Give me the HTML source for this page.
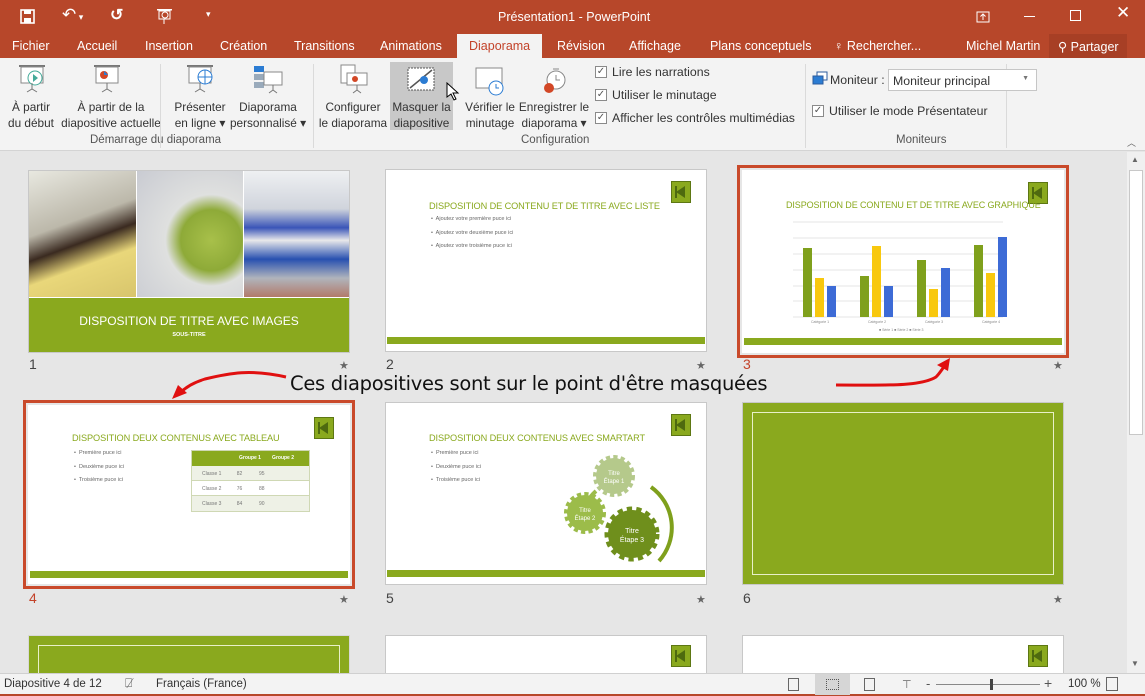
<!DOCTYPE html>
<html style="width:1145px;height:696px;overflow:hidden"><head><meta charset="utf-8"><style>
*{box-sizing:border-box;margin:0;padding:0}
body{width:1145px;height:696px;overflow:hidden;font-family:"Liberation Sans",sans-serif;background:#e6e6e6;position:relative;font-size:12px}
.abs{position:absolute}
#title{left:0;top:0;width:1145px;height:34px;background:#b7472a}
#tabs{left:0;top:34px;width:1145px;height:24px;background:#b7472a}
.tab{position:absolute;top:5px;color:#fff;font-size:12.5px}
#ribbon{left:0;top:58px;width:1145px;height:93px;background:#f3f3f3;border-bottom:1px solid #d4d4d4}
.rl{position:absolute;font-size:11.8px;color:#333;text-align:center;line-height:16px;white-space:nowrap}
.gl{position:absolute;top:76px;font-size:11.5px;color:#555}
.sep{position:absolute;top:6px;width:1px;height:84px;background:#dadada}
.cb{position:absolute;width:12px;height:12px;border:1px solid #8a8a8a;background:#fff;font-size:10px;line-height:10px;text-align:center;color:#555}
.slide{position:absolute;width:322px;height:183px;background:#fff;border:1px solid #c8c8c8;overflow:hidden}
.sel{outline:3px solid #c94a2b;outline-offset:2px;border-color:#fff}
.bar{position:absolute;left:1px;right:1px;bottom:7px;height:7px;background:#8aa91e}
.ico{position:absolute;right:15px;top:11px;width:20px;height:22px;background:#8aa91e;border:1px solid #5d7713}
.ico:after{content:"";position:absolute;left:4px;top:4px;border-right:9px solid #4e6a0f;border-top:6px solid transparent;border-bottom:6px solid transparent}
.ico:before{content:"";position:absolute;left:3px;top:4px;width:2px;height:12px;background:#4e6a0f}
.st{position:absolute;left:43px;top:31px;color:#8aa91e;font-size:9.2px;white-space:nowrap;letter-spacing:-0.1px}
.bl{position:absolute;left:45px;font-size:5.5px;color:#666;white-space:nowrap}
.num{position:absolute;font-size:14px;color:#444}
.star{position:absolute;font-size:11px;color:#666}
#status{left:0;top:673px;width:1145px;height:23px;background:#f3f3f3;border-top:1px solid #d0d0d0;border-bottom:2px solid #b7472a;z-index:5}
</style></head><body>
<div id="title" class="abs">
 <svg class="abs" style="left:20px;top:9px" width="16" height="16"><rect x="1" y="1" width="13" height="13" fill="none" stroke="#fff" stroke-width="1.6"/><rect x="4" y="1" width="7" height="4" fill="#fff"/><rect x="4" y="9" width="7" height="5" fill="#fff"/></svg>
 <div class="abs" style="left:62px;top:5px;color:#fff;font-size:17px">↶<span style="font-size:9px"> ▾</span></div>
 <div class="abs" style="left:110px;top:5px;color:#fff;font-size:16px;font-weight:bold">↺</div>
 <svg class="abs" style="left:156px;top:8px" width="18" height="17"><rect x="1" y="1" width="15" height="1.5" fill="#fff"/><rect x="3" y="3" width="11" height="8" fill="none" stroke="#fff"/><circle cx="9" cy="7" r="3" fill="none" stroke="#fff"/><line x1="8" y1="11" x2="8" y2="16" stroke="#fff"/></svg>
 <div class="abs" style="left:206px;top:9px;color:#fff;font-size:9px">▾</div>
 <div class="abs" style="left:498px;top:10px;color:#fff;font-size:12.5px">Présentation1 - PowerPoint</div>
 <svg class="abs" style="left:976px;top:11px" width="14" height="12"><rect x="1" y="1" width="12" height="10" fill="none" stroke="#fff"/><path d="M7 3v6M4.5 5.5L7 3l2.5 2.5" stroke="#fff" fill="none"/></svg>
 <div class="abs" style="left:1024px;top:16px;width:11px;height:1px;background:#fff"></div>
 <div class="abs" style="left:1070px;top:10px;width:11px;height:11px;border:1px solid #fff"></div>
 <div class="abs" style="left:1116px;top:3px;color:#fff;font-size:17px">✕</div>
</div>
<div id="tabs" class="abs">
 <span class="tab" style="left:12px">Fichier</span>
 <span class="tab" style="left:77px">Accueil</span>
 <span class="tab" style="left:145px">Insertion</span>
 <span class="tab" style="left:220px">Création</span>
 <span class="tab" style="left:294px">Transitions</span>
 <span class="tab" style="left:380px">Animations</span>
 <div class="abs" style="left:457px;top:0;width:85px;height:24px;background:#f3f3f3"></div>
 <span class="tab" style="left:469px;color:#c3432a">Diaporama</span>
 <span class="tab" style="left:557px">Révision</span>
 <span class="tab" style="left:629px">Affichage</span>
 <span class="tab" style="left:710px">Plans conceptuels</span>
 <span class="tab" style="left:834px">♀ Rechercher...</span>
 <span class="tab" style="left:966px">Michel Martin</span>
 <div class="abs" style="left:1049px;top:0;width:78px;height:24px;background:#a73f25"></div>
 <span class="tab" style="left:1058px">⚲ Partager</span>
</div>
<div id="ribbon" class="abs">
 <svg class="abs" style="left:17px;top:6px" width="30" height="32"><rect x="2" y="1" width="26" height="2" fill="#777"/><rect x="4" y="3" width="22" height="16" fill="#fff" stroke="#888"/><circle cx="18" cy="14" r="7" fill="#fff" stroke="#4a9"/><path d="M16 10l5 4-5 4z" fill="#4a9"/><path d="M15 19v6M10 28l5-3 5 3" stroke="#777" fill="none"/></svg>
 <svg class="abs" style="left:92px;top:6px" width="30" height="32"><rect x="2" y="1" width="26" height="2" fill="#777"/><rect x="4" y="3" width="22" height="16" fill="#fff" stroke="#888"/><circle cx="12" cy="11" r="4" fill="#d24726"/><path d="M12 7v4h4" fill="#2b7cd3"/><path d="M15 19v6M10 28l5-3 5 3" stroke="#777" fill="none"/></svg>
 <svg class="abs" style="left:185px;top:6px" width="32" height="32"><rect x="2" y="1" width="26" height="2" fill="#777"/><rect x="4" y="3" width="22" height="16" fill="#fff" stroke="#888"/><circle cx="20" cy="13" r="7" fill="#fff" stroke="#2b7cd3"/><path d="M13 13h14M20 6v14" stroke="#2b7cd3"/><path d="M15 19v6M10 28l5-3 5 3" stroke="#777" fill="none"/></svg>
 <svg class="abs" style="left:252px;top:6px" width="32" height="32"><rect x="2" y="2" width="10" height="6" fill="#2b7cd3"/><rect x="2" y="10" width="10" height="6" fill="#9ab"/><rect x="2" y="18" width="10" height="6" fill="#9ab"/><rect x="12" y="8" width="18" height="13" fill="#fff" stroke="#888"/><path d="M21 21v5M17 29l4-3 4 3" stroke="#777" fill="none"/></svg>
 <svg class="abs" style="left:337px;top:6px" width="32" height="32"><rect x="4" y="1" width="14" height="18" fill="#fff" stroke="#888"/><rect x="10" y="9" width="20" height="12" fill="#fff" stroke="#888"/><circle cx="18" cy="15" r="3" fill="#d24726"/><path d="M20 21v5M16 29l4-3 4 3" stroke="#777" fill="none"/></svg>
 <div class="abs" style="left:390px;top:4px;width:63px;height:68px;background:#c8c8c8"></div>
 <svg class="abs" style="left:406px;top:8px" width="30" height="28"><rect x="2" y="2" width="26" height="22" fill="#fff" stroke="#555" stroke-dasharray="2 1"/><path d="M4 22L26 4" stroke="#555" stroke-width="1.5"/><circle cx="18" cy="14" r="4" fill="#2b7cd3"/></svg>
 <svg class="abs" style="left:446px;top:24px" width="14" height="20"><path d="M1 1v14l4-3 3 6 2-1-3-6h5z" fill="#fff" stroke="#000"/></svg>
 <svg class="abs" style="left:474px;top:8px" width="34" height="32"><rect x="2" y="2" width="26" height="20" fill="#fff" stroke="#888"/><circle cx="22" cy="22" r="7" fill="#fff" stroke="#2b7cd3"/><path d="M22 18v4h3" stroke="#2b7cd3" fill="none"/></svg>
 <svg class="abs" style="left:537px;top:6px" width="30" height="32"><circle cx="19" cy="16" r="9" fill="#fff" stroke="#888"/><path d="M19 11v5h4M16 5h6" stroke="#888" fill="none"/><circle cx="12" cy="24" r="5" fill="#d24726"/></svg>
 <div class="rl" style="left:4px;top:41px;width:54px">À partir<br>du début</div>
 <div class="rl" style="left:58px;top:41px;width:106px">À partir de la<br>diapositive actuelle</div>
 <div class="rl" style="left:170px;top:41px;width:60px">Présenter<br>en ligne ▾</div>
 <div class="rl" style="left:228px;top:41px;width:80px">Diaporama<br>personnalisé ▾</div>
 <div class="rl" style="left:315px;top:41px;width:76px">Configurer<br>le diaporama</div>
 <div class="rl" style="left:390px;top:41px;width:63px">Masquer la<br>diapositive</div>
 <div class="rl" style="left:458px;top:41px;width:64px">Vérifier le<br>minutage</div>
 <div class="rl" style="left:516px;top:41px;width:76px">Enregistrer le<br>diaporama ▾</div>
 <div class="gl" style="left:90px">Démarrage du diaporama</div>
 <div class="gl" style="left:521px">Configuration</div>
 <div class="gl" style="left:896px">Moniteurs</div>
 <div class="sep" style="left:160px"></div><div class="sep" style="left:313px"></div><div class="sep" style="left:805px"></div><div class="sep" style="left:1006px"></div>
 <div class="cb" style="left:595px;top:8px">✓</div><div class="abs" style="left:612px;top:7px;font-size:12.3px;color:#333">Lire les narrations</div>
 <div class="cb" style="left:595px;top:31px">✓</div><div class="abs" style="left:612px;top:30px;font-size:12.3px;color:#333">Utiliser le minutage</div>
 <div class="cb" style="left:595px;top:54px">✓</div><div class="abs" style="left:612px;top:53px;font-size:12.3px;color:#333">Afficher les contrôles multimédias</div>
 <svg class="abs" style="left:812px;top:13px" width="16" height="16"><rect x="5" y="1" width="10" height="8" fill="#fff" stroke="#2b5b9c"/><rect x="1" y="5" width="10" height="8" fill="#2b7cd3" stroke="#2b5b9c"/></svg>
 <div class="abs" style="left:830px;top:15px;font-size:12.3px;color:#333">Moniteur :</div>
 <div class="abs" style="left:888px;top:11px;width:149px;height:22px;background:#fff;border:1px solid #c6c6c6;font-size:12.3px;color:#333;padding:4px 0 0 4px">Moniteur principal<span style="position:absolute;right:7px;top:5px;font-size:7px;color:#777">▼</span></div>
 <div class="cb" style="left:812px;top:47px">✓</div><div class="abs" style="left:829px;top:46px;font-size:12.3px;color:#333">Utiliser le mode Présentateur</div>
 <div class="abs" style="left:1127px;top:78px;font-size:9px;color:#666">︿</div>
</div>
<!-- scrollbar -->
<div class="abs" style="left:1127px;top:152px;width:18px;height:521px;background:#f0f0f0"></div>
<div class="abs" style="left:1129px;top:170px;width:14px;height:265px;background:#fff;border:1px solid #c8c8c8"></div>
<div class="abs" style="left:1131px;top:155px;font-size:8px;color:#666">▲</div>
<div class="abs" style="left:1131px;top:659px;font-size:8px;color:#666">▼</div>

<!-- slide 1 -->
<div class="slide" style="left:28px;top:170px">
 <div class="abs" style="left:0;top:0;width:107px;height:126px;background:linear-gradient(160deg,#e8e8e0 0%,#bcb8aa 40%,#3a2a20 55%,#e9d77a 70%,#d8c56c 100%)"></div>
 <div class="abs" style="left:108px;top:0;width:106px;height:126px;background:radial-gradient(circle at 70% 55%,#a8c04a 0,#8eaa38 30%,#dfe0df 45%,#c9cbd2 100%)"></div>
 <div class="abs" style="left:215px;top:0;width:107px;height:126px;background:linear-gradient(180deg,#eef0f2 0%,#d0d4dc 30%,#3a55b8 45%,#e8e8ea 55%,#2850b0 70%,#b0b4bc 85%,#b27a6a 100%)"></div>
 <div class="abs" style="left:0;top:126px;width:322px;height:57px;background:#8aa91e;border-top:1px solid #fff"></div>
 <div class="abs" style="left:0;top:143px;width:320px;text-align:center;color:#fff;font-size:12px">DISPOSITION DE TITRE AVEC IMAGES</div>
 <div class="abs" style="left:0;top:161px;width:320px;text-align:center;color:#fff;font-size:5.5px;font-weight:bold">SOUS-TITRE</div>
</div>
<div class="num" style="left:29px;top:356px">1</div><div class="star" style="left:339px;top:359px">★</div>

<!-- slide 2 -->
<div class="slide" style="left:385px;top:169px">
 <div class="ico"></div>
 <div class="st">DISPOSITION DE CONTENU ET DE TITRE AVEC LISTE</div>
 <div class="bl" style="top:46px">•&nbsp; Ajoutez votre première puce ici</div>
 <div class="bl" style="top:60px">•&nbsp; Ajoutez votre deuxième puce ici</div>
 <div class="bl" style="top:73px">•&nbsp; Ajoutez votre troisième puce ici</div>
 <div class="bar"></div>
</div>
<div class="num" style="left:386px;top:356px">2</div><div class="star" style="left:696px;top:359px">★</div>

<!-- slide 3 -->
<div class="slide sel" style="left:742px;top:170px">
 <div class="ico"></div>
 <div class="st" style="left:43px;top:29px;font-size:9px">DISPOSITION DE CONTENU ET DE TITRE AVEC GRAPHIQUE</div>
 <svg class="abs" style="left:40px;top:48px" width="240" height="115">
  <g stroke="#e4e4e4"><line x1="10" y1="3" x2="220" y2="3"/><line x1="10" y1="19" x2="220" y2="19"/><line x1="10" y1="35" x2="220" y2="35"/><line x1="10" y1="51" x2="220" y2="51"/><line x1="10" y1="67" x2="220" y2="67"/><line x1="10" y1="82" x2="220" y2="82"/><line x1="10" y1="98" x2="220" y2="98"/></g>
  <rect x="20" y="29" width="9" height="69" fill="#7fa01c"/><rect x="32" y="59" width="9" height="39" fill="#f8c80e"/><rect x="44" y="67" width="9" height="31" fill="#3d6bd6"/>
  <rect x="77" y="57" width="9" height="41" fill="#7fa01c"/><rect x="89" y="27" width="9" height="71" fill="#f8c80e"/><rect x="101" y="67" width="9" height="31" fill="#3d6bd6"/>
  <rect x="134" y="41" width="9" height="57" fill="#7fa01c"/><rect x="146" y="70" width="9" height="28" fill="#f8c80e"/><rect x="158" y="49" width="9" height="49" fill="#3d6bd6"/>
  <rect x="191" y="26" width="9" height="72" fill="#7fa01c"/><rect x="203" y="54" width="9" height="44" fill="#f8c80e"/><rect x="215" y="18" width="9" height="80" fill="#3d6bd6"/>
  <g font-size="3.5" fill="#888"><text x="28" y="104">Catégorie 1</text><text x="85" y="104">Catégorie 2</text><text x="142" y="104">Catégorie 3</text><text x="199" y="104">Catégorie 4</text><text x="96" y="112">■ Série 1 ■ Série 2 ■ Série 3</text></g>
 </svg>
 <div class="bar"></div>
</div>
<div class="num" style="left:743px;top:356px;color:#c3432a">3</div><div class="star" style="left:1053px;top:359px">★</div>

<!-- annotation -->
<div class="abs" style="left:290px;top:372px;font-family:'DejaVu Sans',sans-serif;font-size:19.5px;color:#111;letter-spacing:-0.3px;white-space:nowrap">Ces diapositives sont sur le point d'être masquées</div>
<svg class="abs" style="left:0;top:355px" width="1000" height="50">
 <path d="M286 22 C250 14 230 18 205 24 C195 27 186 32 180 38" stroke="#e01010" stroke-width="3" fill="none"/>
 <path d="M172 44 L178 30 L187 38 Z" fill="#e01010"/>
 <path d="M836 30 C880 30 920 32 936 22 C940 18 942 14 944 12" stroke="#e01010" stroke-width="3" fill="none"/>
 <path d="M950 3 L937 10 L948 16 Z" fill="#e01010"/>
</svg>

<!-- slide 4 -->
<div class="slide sel" style="left:28px;top:405px;height:179px">
 <div class="ico"></div>
 <div class="st" style="top:27px">DISPOSITION DEUX CONTENUS AVEC TABLEAU</div>
 <div class="bl" style="top:44px">•&nbsp; Première puce ici</div>
 <div class="bl" style="top:58px">•&nbsp; Deuxième puce ici</div>
 <div class="bl" style="top:71px">•&nbsp; Troisième puce ici</div>
 <div class="abs" style="left:162px;top:44px;width:119px;border:1px solid #cfd8b4;font-size:5px;color:#777;white-space:nowrap">
  <div style="height:15px;background:#8aa91e;color:#fff;font-weight:bold;padding:4px 0 0 47px">Groupe 1 &nbsp;&nbsp;&nbsp;&nbsp;&nbsp;&nbsp; Groupe 2</div>
  <div style="height:15px;background:#eef1e6;padding:5px 0 0 10px;border-bottom:1px solid #cfd8b4">Classe 1 &nbsp;&nbsp;&nbsp;&nbsp;&nbsp;&nbsp;&nbsp;&nbsp;&nbsp; 82 &nbsp;&nbsp;&nbsp;&nbsp;&nbsp;&nbsp;&nbsp;&nbsp;&nbsp;&nbsp; 95</div>
  <div style="height:15px;background:#fff;padding:5px 0 0 10px;border-bottom:1px solid #cfd8b4">Classe 2 &nbsp;&nbsp;&nbsp;&nbsp;&nbsp;&nbsp;&nbsp;&nbsp;&nbsp; 76 &nbsp;&nbsp;&nbsp;&nbsp;&nbsp;&nbsp;&nbsp;&nbsp;&nbsp;&nbsp; 88</div>
  <div style="height:15px;background:#eef1e6;padding:5px 0 0 10px">Classe 3 &nbsp;&nbsp;&nbsp;&nbsp;&nbsp;&nbsp;&nbsp;&nbsp;&nbsp; 84 &nbsp;&nbsp;&nbsp;&nbsp;&nbsp;&nbsp;&nbsp;&nbsp;&nbsp;&nbsp; 90</div>
 </div>
 <div class="bar" style="bottom:5px"></div>
</div>
<div class="num" style="left:29px;top:590px;color:#c3432a">4</div><div class="star" style="left:339px;top:593px">★</div>

<!-- slide 5 -->
<div class="slide" style="left:385px;top:402px">
 <div class="ico"></div>
 <div class="st" style="top:30px">DISPOSITION DEUX CONTENUS AVEC SMARTART</div>
 <div class="bl" style="top:47px">•&nbsp; Première puce ici</div>
 <div class="bl" style="top:61px">•&nbsp; Deuxième puce ici</div>
 <div class="bl" style="top:74px">•&nbsp; Troisième puce ici</div>
 <svg class="abs" style="left:160px;top:48px" width="140" height="120">
  <path d="M50 40 A45 45 0 0 0 35 70" stroke="#9cbc4a" stroke-width="4" fill="none"/>
  <path d="M60 18 A45 45 0 0 1 72 8" stroke="#c4d6a0" stroke-width="4" fill="none"/>
  <path d="M110 48 A50 50 0 0 1 118 122" stroke="#7fa01c" stroke-width="4" fill="none" transform="translate(-5,-12)"/>
  <circle cx="68" cy="25" r="18" fill="#b5c98b" stroke="#b5c98b" stroke-width="6" stroke-dasharray="4 3"/>
  <circle cx="39" cy="62" r="18" fill="#9cbc4a" stroke="#9cbc4a" stroke-width="6" stroke-dasharray="4 3"/>
  <circle cx="86" cy="83" r="24" fill="#6f8f1c" stroke="#6f8f1c" stroke-width="7" stroke-dasharray="5 4"/>
  <g fill="#fff" font-size="6" text-anchor="middle"><text x="68" y="24">Titre</text><text x="68" y="32">Étape 1</text><text x="39" y="61">Titre</text><text x="39" y="69">Étape 2</text><text x="86" y="82" font-size="7">Titre</text><text x="86" y="91" font-size="7">Étape 3</text></g>
 </svg>
 <div class="bar"></div>
</div>
<div class="num" style="left:386px;top:590px">5</div><div class="star" style="left:696px;top:593px">★</div>

<!-- slide 6 -->
<div class="slide" style="left:742px;top:402px;background:#8aa91e">
 <div class="abs" style="left:9px;top:9px;right:9px;bottom:9px;border:1px solid #e8f0c8"></div>
</div>
<div class="num" style="left:743px;top:590px">6</div><div class="star" style="left:1053px;top:593px">★</div>

<!-- row 3 -->
<div class="slide" style="left:28px;top:635px;height:38px;background:#8aa91e;border-color:#d8d8d8;border-bottom:0">
 <div class="abs" style="left:9px;top:9px;right:9px;height:29px;border:1px solid #e8f0c8;border-bottom:0"></div>
</div>
<div class="slide" style="left:385px;top:635px;height:38px;border-bottom:0"><div class="ico" style="top:9px"></div></div>
<div class="slide" style="left:742px;top:635px;height:38px;border-bottom:0"><div class="ico" style="top:9px"></div></div>

<!-- status -->
<div id="status" class="abs">
 <div class="abs" style="left:4px;top:4px;font-size:11.5px;color:#333">Diapositive 4 de 12</div>
 <div class="abs" style="left:125px;top:2px;font-size:12px;color:#555">⎕̸</div>
 <div class="abs" style="left:156px;top:4px;font-size:11.5px;color:#333">Français (France)</div>
 <div class="abs" style="left:788px;top:4px;width:11px;height:13px;border:1px solid #666"></div>
 <div class="abs" style="left:815px;top:0;width:35px;height:21px;background:#d6d6d6"></div>
 <div class="abs" style="left:826px;top:5px;width:13px;height:11px;border:1px dotted #555"></div>
 <div class="abs" style="left:864px;top:4px;width:11px;height:13px;border:1px solid #666"></div>
 <div class="abs" style="left:902px;top:4px;font-size:11px;color:#666">⊤</div>
 <div class="abs" style="left:926px;top:2px;font-size:13px;color:#555">-</div>
 <div class="abs" style="left:936px;top:10px;width:104px;height:1px;background:#888"></div>
 <div class="abs" style="left:990px;top:5px;width:3px;height:11px;background:#444"></div>
 <div class="abs" style="left:1044px;top:1px;font-size:14px;color:#555">+</div>
 <div class="abs" style="left:1068px;top:4px;font-size:11.5px;color:#333">100 %</div>
 <div class="abs" style="left:1106px;top:3px;width:12px;height:14px;border:1px solid #666"></div>
</div>
</body></html>
